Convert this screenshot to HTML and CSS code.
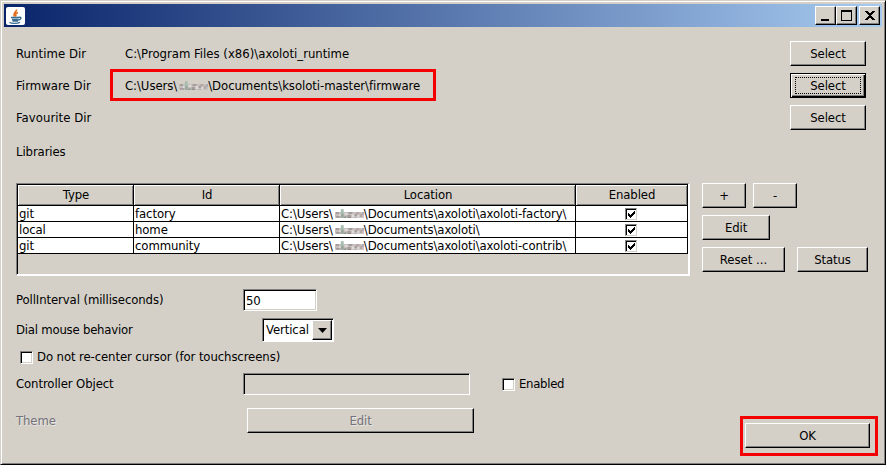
FILE: index.html
```html
<!DOCTYPE html>
<html lang="en">
<head>
<meta charset="utf-8">
<title>Preferences</title>
<link rel="stylesheet" href="styles.css">
</head>
<body>
<svg width="0" height="0" class="defs" aria-hidden="true">
  <symbol id="mosaic" viewBox="0 0 30 10">
    <path fill="#c6bfbc" d="M0 3h30v6H0z"/>
    <path fill="#a59c9b" d="M1 3h3v2H1zM1 7h4v2H1zM14 3h4v2h-4zM13 6h4v3h-4zM20 5h3v2h-3z"/>
    <path fill="#a9bdae" d="M6 0h3v5H6z"/>
    <path fill="#96a79c" d="M6 5h3v4H6zM10 7h2v2h-2z"/>
    <path fill="#ddd8dc" d="M4 5h2v2H4zM10 4h3v2h-3zM17 5h3v3h-3zM23 6h2v3h-2z"/>
    <path fill="#b5a5a4" d="M22 3h3v2h-3zM26 5h2v3h-2zM20 8h3v1h-3z"/>
    <path fill="#a8adbb" d="M28 3h2v3h-2z"/>
    <path fill="#8a827c" d="M9 8h2v1H9zM13 8h3v1h-3z"/>
  </symbol>
  <symbol id="tick" viewBox="0 0 9 9">
    <path fill="#000" d="M1 3h1v1h1v1h1v-1h1v-1h1v-1h1v-1h1v3h-1v1h-1v1h-1v1h-1v1h-1v-1h-1v-1h-1z"/>
  </symbol>
</svg>
<div class="window">
  <header class="titlebar">
    <span class="java">
      <svg width="17" height="17" viewBox="0 0 17 17" fill="none">
        <path d="M9.500 1.500C10 4 5.500 5 7.500 8.500M11 4.500C8.500 5.500 8 6.500 9.200 8.500" stroke="#e76f1c" stroke-width="1.700"/>
        <path d="M4 9.500h8M5 11.500h6.500M5.500 13h5.500M12 9.300c3-.5 2.500 2-.5 3M2.500 14.500c2 1.300 8.500 1.200 10.500-.2" stroke="#376b91" stroke-width="1.400"/>
      </svg>
    </span>
    <span class="btn cap"><svg width="16" height="15"><path d="M3 11h8v2H3z"/></svg></span>
    <span class="btn cap"><svg width="16" height="15"><path fill-rule="evenodd" d="M2 2h11v11H2zM3 4v8h9V4z"/></svg></span>
    <span class="btn cap close"><svg width="16" height="15"><path d="M3 3h3v1h1v1h2V4h1V3h3v1h-1v1h-1v1h-1v1H9v1h1v1h1v1h1v1h1v1h-3v-1H9v-1H7v1H6v1H3v-1h1v-1h1V9h1V8h1V7H6V6H5V5H4V4H3z"/></svg></span>
  </header>
  <main class="form">
    <div class="row dir"><span class="label">Runtime Dir</span><span class="path">C:\Program Files (x86)\axoloti_runtime</span><span class="btn select">Select</span></div>
    <div class="row dir marked"><span class="label">Firmware Dir</span><span class="path redacted">C:\Users\<svg class="user"><use href="#mosaic"/></svg>\Documents\ksoloti-master\firmware</span><span class="btn select focus">Select</span></div>
    <div class="row dir"><span class="label">Favourite Dir</span><span class="path"></span><span class="btn select">Select</span></div>
    <div class="row libs-title">Libraries</div>
    <section class="libs">
      <div class="pane">
        <div class="grid head"><span>Type</span><span>Id</span><span>Location</span><span>Enabled</span></div>
        <div class="grid"><span>git</span><span>factory</span><span>C:\Users\<svg class="user"><use href="#mosaic"/></svg>\Documents\axoloti\axoloti-factory\</span><span class="mid"><i class="check small"><svg width="9" height="9"><use href="#tick"/></svg></i></span></div>
        <div class="grid"><span>local</span><span>home</span><span>C:\Users\<svg class="user"><use href="#mosaic"/></svg>\Documents\axoloti\</span><span class="mid"><i class="check small"><svg width="9" height="9"><use href="#tick"/></svg></i></span></div>
        <div class="grid"><span>git</span><span>community</span><span>C:\Users\<svg class="user"><use href="#mosaic"/></svg>\Documents\axoloti\axoloti-contrib\</span><span class="mid"><i class="check small"><svg width="9" height="9"><use href="#tick"/></svg></i></span></div>
      </div>
      <div class="actions">
        <div class="line"><span class="btn plus">+</span><span class="btn plus">-</span></div>
        <div class="line"><span class="btn edit">Edit</span></div>
        <div class="line wide"><span class="btn reset">Reset ...</span><span class="btn status">Status</span></div>
      </div>
    </section>
    <div class="row poll"><span class="name">PollInterval (milliseconds)</span><span class="field short">50</span></div>
    <div class="row dial"><span class="name dial-name">Dial mouse behavior</span><span class="combo"><span>Vertical</span><span class="btn arrow"><svg width="9" height="5"><path d="M0 0h9L4.500 5z"/></svg></span></span></div>
    <div class="row touch"><i class="check"></i><span>Do not re-center cursor (for touchscreens)</span></div>
    <div class="row ctrl"><span class="name">Controller Object</span><span class="field long"></span><i class="check"></i><span>Enabled</span></div>
    <div class="row theme"><span class="name">Theme</span><span class="btn wide-btn">Edit</span></div>
    <div class="row confirm"><span class="ok-frame"><span class="btn ok">OK</span></span></div>
  </main>
</div>
</body>
</html>
```
FILE: styles.css
```css
*, *::before, *::after { box-sizing: border-box; }
body {
  margin: 0;
  width: 886px;
  height: 465px;
  overflow: hidden;
  font: 13px/16px "DejaVu Sans Condensed", "DejaVu Sans", sans-serif;
  font-stretch: condensed;
  letter-spacing: -0.1px;
  color: #000;
  white-space: nowrap;
}
.defs { position: absolute; }
svg { flex: none; }
.window {
  width: 886px;
  height: 465px;
  padding: 2px;
  background: #d4d0c8;
  border: 1px solid #d4d0c8;
  border-right-color: #000;
  border-bottom-color: #000;
  box-shadow: inset 1px 1px #fff, inset -1px -1px #808080;
}
.titlebar {
  display: flex;
  align-items: center;
  height: 23px;
  margin: 1px 1px 0;
  padding: 0 2px;
  background: linear-gradient(90deg, #0a246a, #a6caf0);
}
.java {
  width: 19px;
  height: 18px;
  margin-right: auto;
  padding: 1px;
  border-radius: 2px;
  background: #fff;
}
.java svg { display: block; }
.btn {
  display: flex;
  align-items: center;
  justify-content: center;
  height: 25px;
  background: #d4d0c8;
  border: 1px solid;
  border-color: #fff #000 #000 #fff;
  box-shadow: inset -1px -1px #808080;
}
.cap { width: 21px; height: 19px; }
.cap svg { display: block; }
.close { margin-left: 2px; }
.form { padding: 14px 15px 0 13px; }
.row { display: flex; align-items: center; }
.dir { height: 25px; margin-bottom: 7px; position: relative; padding-right: 2px; }
.label { width: 109px; letter-spacing: 0.05px; }
.path { flex: 1; letter-spacing: 0; }
.redacted { letter-spacing: -0.06px; }
.select { width: 76px; }
.focus {
  border-color: #000;
  box-shadow: inset 1px 1px #fff, inset -1px -1px #000, inset -2px -2px #808080;
  position: relative;
}
.focus::after { content: ""; position: absolute; inset: 3px 4px; border: 1px dotted #000; }
.marked::before {
  content: "";
  position: absolute;
  left: 94px;
  top: -4px;
  width: 326px;
  height: 32px;
  border: 3px solid #f40000;
}
.user { width: 29px; height: 10px; margin-left: 2px; vertical-align: -1px; }
.libs-title { height: 30px; }
.libs { display: flex; height: 93px; margin-top: 16px; }
.pane {
  width: 674px;
  border: solid;
  border-width: 1px 2px 2px 1px;
  border-color: #808080 #fff #fff #808080;
  padding: 1px 0 0 1px;
  box-shadow: inset 1px 1px #000;
}
.grid { display: grid; grid-template-columns: 116px 146px 296px 112px; height: 16px; background: #fff; }
.grid > span { border-right: 1px solid #000; border-bottom: 1px solid #000; padding-left: 1px; line-height: 16px; overflow: hidden; }
.grid.head { height: 21px; background: #d4d0c8; }
.head > span { text-align: center; line-height: 20px; box-shadow: inset 1px 1px #fff, inset -1px -1px #808080; }
.grid > .mid { display: flex; justify-content: center; align-items: center; padding: 0 1px 0 0; }
.check {
  width: 13px;
  height: 13px;
  flex: none;
  background: #fff;
  border: 1px solid;
  border-color: #808080 #fff #fff #808080;
  box-shadow: inset 1px 1px #000, inset -1px -1px #d4d0c8;
}
.small { width: 12px; height: 12px; border-color: #808080 #d4d0c8 #d4d0c8 #808080; box-shadow: inset 1px 1px #000; padding: 1px; }
.small svg { display: block; }
.actions { margin-left: 12px; display: grid; gap: 7px; align-content: start; }
.line { display: flex; gap: 7px; }
.wide { gap: 12px; }
.plus { width: 44px; }
.edit { width: 68px; }
.reset { width: 83px; letter-spacing: 0; }
.status { width: 71px; }
.name { width: 227px; }
.dial-name { letter-spacing: -0.22px; }
.poll { height: 22px; margin-top: 13px; }
.field {
  height: 22px;
  padding: 3px 2px;
  border: 1px solid;
  border-color: #808080 #fff #fff #808080;
  box-shadow: inset 1px 1px #000, inset -1px -1px #d4d0c8;
}
.short { width: 74px; background: #fff; }
.long { width: 227px; margin-right: 32px; box-shadow: inset 1px 1px #000; }
.dial { height: 24px; margin-top: 7px; }
.combo {
  display: flex;
  align-items: center;
  width: 72px;
  height: 24px;
  margin-left: 19px;
  padding: 1px 1px 1px 3px;
  background: #fff;
  border: 1px solid;
  border-color: #808080 #fff #fff #808080;
  box-shadow: inset 1px 1px #000;
}
.arrow { width: 20px; height: 20px; margin-left: auto; }
.touch { height: 16px; margin-top: 7px; padding-left: 4px; gap: 4px; }
.ctrl { height: 22px; margin-top: 8px; }
.ctrl .check + span { margin-left: 4px; letter-spacing: -0.3px; }
.theme { height: 25px; margin-top: 13px; color: #74717a; text-shadow: 1px 1px #e9e7e2; }
.wide-btn { width: 227px; margin-left: 4px; }
.confirm { justify-content: flex-end; margin-top: -17px; margin-right: -10px; }
.ok-frame { width: 138px; height: 40px; padding: 4px 2px; border: 3px solid #f40000; }
.ok { width: 125px; }
```
